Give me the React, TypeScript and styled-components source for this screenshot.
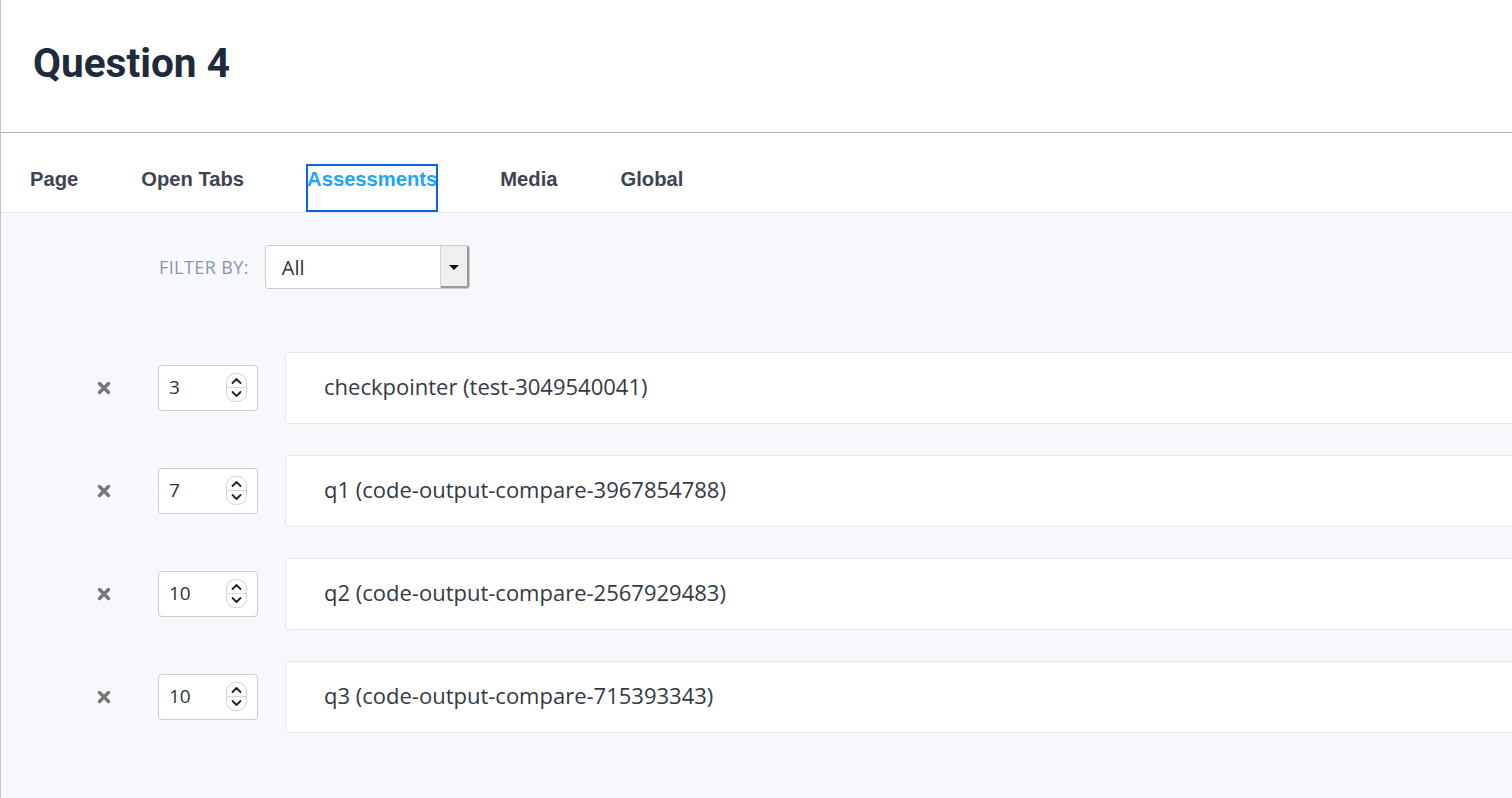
import styled, { createGlobalStyle } from 'styled-components';

const GlobalStyle = createGlobalStyle`
  html, body {
    margin: 0;
    padding: 0;
    overflow: hidden;
  }
  body {
    font-family: 'Open Sans', 'Noto Sans', sans-serif;
    background: #f7f8fc;
  }
`;

const Page = styled.div`
  min-height: 100vh;
  border-left: 1px solid #c4c4c4;
  background: #f7f8fc;
  overflow: hidden;
`;

const Header = styled.header`
  box-sizing: border-box;
  height: 133px;
  background: #ffffff;
  border-bottom: 1px solid #a9b4c6;
  padding: 39px 0 0 32px;
`;

const Title = styled.h1`
  margin: 0;
  font-family: 'Roboto', 'Liberation Sans', sans-serif;
  font-weight: 700;
  font-size: 40.6px;
  line-height: 48px;
  color: #1f2a3d;
`;

const TabBar = styled.nav`
  box-sizing: border-box;
  height: 80px;
  display: flex;
  align-items: flex-end;
  gap: 63px;
  padding: 31px 0 0 29px;
  background: #ffffff;
  border-bottom: 1px solid #e7e9ee;
`;

const Tab = styled.div<{ $active?: boolean }>`
  box-sizing: border-box;
  height: 48px;
  padding-top: 4px;
  font-family: 'Liberation Sans', Arial, sans-serif;
  font-weight: 700;
  font-size: 20.2px;
  line-height: 23px;
  color: ${({ $active }) => ($active ? '#22a5f5' : '#3d4451')};
  cursor: pointer;
  ${({ $active }) =>
    $active &&
    `
    margin: 0 -1px;
    padding-left: 1px;
    padding-right: 1px;
    box-shadow: inset 0 0 0 2px #0b63e2;
  `}
`;

const Content = styled.main`
  padding: 32px 0 40px 0;
`;

const FilterRow = styled.div`
  display: flex;
  align-items: center;
  gap: 16px;
  padding-left: 158px;
`;

const FilterLabel = styled.span`
  font-size: 18px;
  letter-spacing: 0.4px;
  text-transform: uppercase;
  color: #8796b0;
`;

const Select = styled.div`
  box-sizing: border-box;
  width: 205px;
  height: 44px;
  display: flex;
  align-items: stretch;
  background: #ffffff;
  border: 1px solid #cccccc;
  border-radius: 3px;
  overflow: hidden;
`;

const SelectValue = styled.div`
  flex: 1;
  display: flex;
  align-items: center;
  padding-left: 16px;
  font-size: 20px;
  color: #333333;
`;

const SelectArrow = styled.div`
  width: 28px;
  display: flex;
  align-items: center;
  justify-content: center;
  background: #efefef;
  border-left: 1px solid #d4d4d4;
  box-shadow: inset -2px -2px 0 #9a9a9a;
`;

const Triangle = styled.span`
  width: 0;
  height: 0;
  border-left: 5px solid transparent;
  border-right: 5px solid transparent;
  border-top: 5px solid #111111;
  margin-right: 2px;
`;

const List = styled.div`
  display: flex;
  flex-direction: column;
  gap: 31px;
  margin-top: 63px;
  padding-left: 96px;
`;

const Row = styled.div`
  display: flex;
  align-items: center;
`;

const RemoveButton = styled.button`
  width: 16px;
  height: 16px;
  padding: 0;
  margin-right: 47px;
  border: none;
  background: none;
  display: flex;
  align-items: center;
  justify-content: center;
  cursor: pointer;
`;

const NumberBox = styled.div`
  box-sizing: border-box;
  width: 100px;
  height: 46px;
  margin-right: 27px;
  display: flex;
  align-items: center;
  justify-content: space-between;
  padding: 0 10px 2px 10px;
  background: #ffffff;
  border: 1px solid #cccccc;
  border-radius: 4px;
  font-size: 19px;
  color: #333333;
  flex-shrink: 0;
`;

const Card = styled.div`
  box-sizing: border-box;
  width: 1300px;
  height: 72px;
  flex-shrink: 0;
  display: flex;
  align-items: center;
  padding: 0 0 4px 38px;
  background: #ffffff;
  border: 1px solid #e6e7ea;
  border-radius: 4px;
  font-size: 22px;
  color: #333a45;
`;

function CrossIcon() {
  return (
    <svg width="14" height="14" viewBox="0 0 14 14">
      <path
        d="M2.5 2.5 L11.5 11.5 M11.5 2.5 L2.5 11.5"
        stroke="#767676"
        strokeWidth="3.4"
        strokeLinecap="round"
      />
    </svg>
  );
}

function Spinner() {
  return (
    <svg width="21" height="29" viewBox="0 0 21 29">
      <rect x="0.5" y="0.5" width="20" height="28" rx="9" fill="#ffffff" stroke="#d2d2d2" />
      <line x1="1" y1="14.5" x2="20" y2="14.5" stroke="#d8d8d8" />
      <path d="M6.5 10 L10.5 6 L14.5 10" fill="none" stroke="#222" strokeWidth="1.8" strokeLinecap="round" strokeLinejoin="round" />
      <path d="M6.5 19 L10.5 23 L14.5 19" fill="none" stroke="#222" strokeWidth="1.8" strokeLinecap="round" strokeLinejoin="round" />
    </svg>
  );
}

const tabs = ['Page', 'Open Tabs', 'Assessments', 'Media', 'Global'];

const assessments = [
  { weight: 3, label: 'checkpointer (test-3049540041)' },
  { weight: 7, label: 'q1 (code-output-compare-3967854788)' },
  { weight: 10, label: 'q2 (code-output-compare-2567929483)' },
  { weight: 10, label: 'q3 (code-output-compare-715393343)' },
];

export default function App() {
  return (
    <>
      <GlobalStyle />
      <Page>
        <Header>
          <Title>Question 4</Title>
        </Header>
        <TabBar>
          {tabs.map((t) => (
            <Tab key={t} $active={t === 'Assessments'}>
              {t}
            </Tab>
          ))}
        </TabBar>
        <Content>
          <FilterRow>
            <FilterLabel>Filter by:</FilterLabel>
            <Select>
              <SelectValue>All</SelectValue>
              <SelectArrow>
                <Triangle />
              </SelectArrow>
            </Select>
          </FilterRow>
          <List>
            {assessments.map((a) => (
              <Row key={a.label}>
                <RemoveButton aria-label="Remove">
                  <CrossIcon />
                </RemoveButton>
                <NumberBox>
                  <span>{a.weight}</span>
                  <Spinner />
                </NumberBox>
                <Card>{a.label}</Card>
              </Row>
            ))}
          </List>
        </Content>
      </Page>
    </>
  );
}
